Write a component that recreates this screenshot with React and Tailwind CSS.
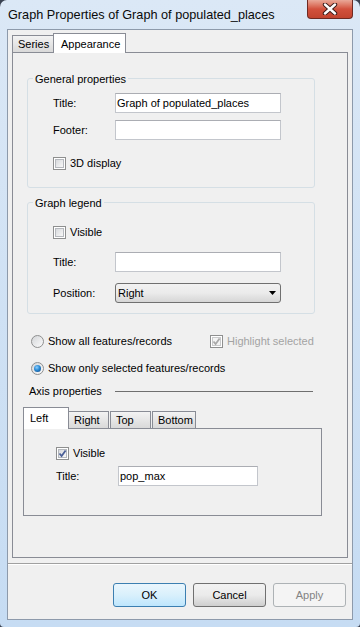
import React from 'react';

const Check = ({ checked, disabled }) => (
  <span className="w-[13px] h-[13px] shrink-0 border border-[#8e8f8f] bg-white p-px flex">
    <span
      className={
        'flex-1 flex items-center justify-center border ' +
        (disabled
          ? 'border-[#c9cacb] bg-[#f4f4f4]'
          : 'border-[#b5b8bd] bg-gradient-to-br from-[#d8dadd] to-[#f8f8f8]')
      }
    >
      {checked && (
        <svg width="9" height="9" viewBox="0 0 9 9" className="-m-[2px]">
          <path
            d="M1.5 4.5 L3.6 7 L7.6 1.5"
            fill="none"
            stroke={disabled ? '#a9a9a9' : '#4a5f97'}
            strokeWidth="1.8"
          />
        </svg>
      )}
    </span>
  </span>
);

const Radio = ({ checked }) => (
  <span className="w-[13px] h-[13px] shrink-0 rounded-full border border-[#8e8f8f] bg-gradient-to-br from-[#d4d6d9] to-[#fbfbfb] flex items-center justify-center">
    {checked && (
      <span className="w-[7px] h-[7px] rounded-full bg-[radial-gradient(circle_at_40%_35%,#8fd0ff_0%,#2a8ad4_45%,#0b3d7a_100%)]" />
    )}
  </span>
);

const TextBox = ({ value, w }) => (
  <div className={'h-[20px] bg-white border border-[#c3c6cc] border-t-[#abadb3] flex items-center pl-[1px] ' + w}>
    {value}
  </div>
);

const Group = ({ title, className, children }) => (
  <div className={'ml-[14px] w-[288px] border border-[#d5dfe5] rounded-[3px] flex flex-col ' + className}>
    <span className="-mt-[7px] ml-[5px] px-[2px] self-start bg-[#f0f0f0] h-[15px] leading-[15px]">{title}</span>
    {children}
  </div>
);

const Row = ({ label, children, className = '', lw = 'w-[62px]' }) => (
  <div className={'flex items-center h-[20px] ' + className}>
    <span className={lw}>{label}</span>
    {children}
  </div>
);

const SmallTab = ({ label, selected, className = '' }) =>
  selected ? (
    <div className={'h-[22px] -mb-px relative z-10 bg-white border border-b-0 border-[#898c95] pl-[6px] pt-[2px] ' + className}>
      {label}
    </div>
  ) : (
    <div className={'h-[17px] bg-gradient-to-b from-[#f3f3f3] to-[#d9d9d9] border border-b-0 border-[#898c95] pl-[5px] leading-[17px] ' + className}>
      {label}
    </div>
  );

const Button = ({ label, kind }) => {
  const styles = {
    ok: 'border-[#3c7fb1] bg-gradient-to-b from-[#eaf6fd] via-[#d9f0fc] to-[#bee6fd] text-black',
    normal: 'border-[#707070] bg-gradient-to-b from-[#f2f2f2] via-[#ebebeb] to-[#cfcfcf] text-black',
    disabled: 'border-[#adb2b5] bg-[#f4f4f4] text-[#838383]',
  };
  return (
    <div className={'w-[73px] h-[24px] rounded-[3px] border flex items-center justify-center ' + styles[kind]}>
      {label}
    </div>
  );
};

export default function App() {
  return (
    <div className="w-[360px] h-[627px] bg-[#3a4252] font-['Liberation_Sans',Arial,sans-serif] text-[11px] text-black">
      <div className="w-full h-full rounded-t-[7px] rounded-b-[4px] bg-gradient-to-b from-[#dbe8f6] via-[#cfe1f4] to-[#c6dcf3] flex flex-col">
        {/* title bar */}
        <div className="h-[29px] flex items-start shrink-0">
          <div className="ml-[8px] mt-[7px] text-[12.7px] leading-[16px] text-[#0a0a0a]">
            Graph Properties of Graph of populated_places
          </div>
          <div className="ml-auto mr-[7px] w-[46px] h-[19px] rounded-b-[4px] border border-t-0 border-[#6e2a22] bg-gradient-to-b from-[#e9a898] via-[#d2513d] to-[#c2442f] flex items-center justify-center">
            <svg width="16" height="12" viewBox="0 0 16 12">
              <path d="M3 1.5 L13 10.5 M13 1.5 L3 10.5" stroke="#3b1a18" strokeWidth="4.4" strokeLinecap="round" />
              <path d="M3 1.5 L13 10.5 M13 1.5 L3 10.5" stroke="#ffffff" strokeWidth="2.4" strokeLinecap="round" />
            </svg>
          </div>
        </div>

        {/* client area */}
        <div className="mx-[7px] h-[591px] shrink-0 border border-[#8d9aab] bg-[#f0f0f0] flex flex-col">
          {/* main tabs */}
          <div className="mt-[3px] ml-[4px] h-[19px] flex items-end">
            <div className="w-[42px] h-[17px] bg-gradient-to-b from-[#f3f3f3] to-[#d9d9d9] border border-b-0 border-[#898c95] pl-[5px] leading-[16px]">
              Series
            </div>
            <div className="-ml-px w-[73px] h-[20px] -mb-px relative z-10 bg-white border border-b-0 border-[#898c95] pl-[7px] pt-[2px]">
              Appearance
            </div>
          </div>
          <div className="ml-[4px] w-[336px] h-[506px] border border-[#898c95] flex flex-col">
            <Group title="General properties" className="mt-[25px] pb-[14px]">
              <Row label="Title:" className="mt-[6px] ml-[25px]">
                <TextBox value="Graph of populated_places" w="w-[166px]" />
              </Row>
              <Row label="Footer:" className="mt-[7px] ml-[25px]">
                <TextBox value="" w="w-[166px]" />
              </Row>
              <div className="mt-[13px] ml-[25px] h-[20px] flex items-center gap-[4px]">
                <Check />
                <span>3D display</span>
              </div>
            </Group>

            <Group title="Graph legend" className="mt-[14px] pb-[10px]">
              <div className="mt-[11px] ml-[25px] h-[20px] flex items-center gap-[4px]">
                <Check />
                <span>Visible</span>
              </div>
              <Row label="Title:" className="mt-[10px] ml-[25px]">
                <TextBox value="" w="w-[166px]" />
              </Row>
              <Row label="Position:" className="mt-[11px] ml-[25px]">
                <div className="w-[166px] h-[20px] rounded-[3px] border border-[#707070] bg-gradient-to-b from-[#f2f2f2] via-[#ebebeb] to-[#d6d6d6] flex items-center pl-[2px] pr-[4px]">
                  <span className="flex-1">Right</span>
                  <svg width="7" height="4" viewBox="0 0 7 4">
                    <path d="M0 0 H7 L3.5 4 Z" fill="#000" />
                  </svg>
                </div>
              </Row>
            </Group>

            <div className="mt-[17px] ml-[18px] h-[20px] flex items-center">
              <Radio />
              <span className="ml-[4px] w-[162px]">Show all features/records</span>
              <Check checked disabled />
              <span className="ml-[4px] text-[#a3a3a3]">Highlight selected</span>
            </div>
            <div className="mt-[7px] ml-[18px] h-[20px] flex items-center">
              <Radio checked />
              <span className="ml-[4px]">Show only selected features/records</span>
            </div>
            <div className="mt-[5px] ml-[16px] h-[16px] flex items-center">
              <span className="w-[86px]">Axis properties</span>
              <span className="w-[198px] h-px bg-[#6f6f6f]" />
            </div>

            {/* axis tabs */}
            <div className="mt-[8px] ml-[10px] h-[21px] flex items-end">
              <SmallTab label="Left" selected className="w-[46px]" />
              <SmallTab label="Right" className="-ml-px w-[41px]" />
              <SmallTab label="Top" className="ml-px w-[41px]" />
              <SmallTab label="Bottom" className="ml-px w-[44px]" />
            </div>
            <div className="ml-[10px] w-[299px] h-[88px] border border-[#898c95] flex flex-col">
              <div className="mt-[14px] ml-[32px] h-[20px] flex items-center gap-[4px]">
                <Check checked />
                <span>Visible</span>
              </div>
              <Row label="Title:" className="mt-[3px] ml-[32px]">
                <TextBox value="pop_max" w="w-[140px]" />
              </Row>
            </div>
          </div>

          {/* separator */}
          <div className="mt-[5px] h-px bg-[#a0a0a0]" />
          <div className="h-px bg-white" />

          {/* buttons */}
          <div className="mt-[18px] mr-[6px] flex justify-end gap-[7px]">
            <Button label="OK" kind="ok" />
            <Button label="Cancel" kind="normal" />
            <Button label="Apply" kind="disabled" />
          </div>
        </div>
      </div>
    </div>
  );
}
